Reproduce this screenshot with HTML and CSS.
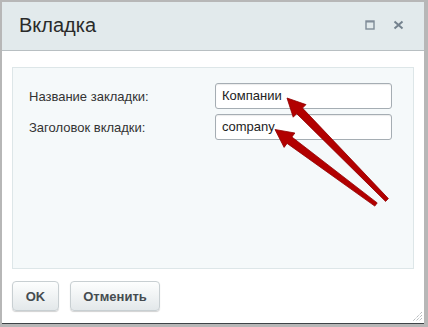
FILE: index.html
```html
<!DOCTYPE html>
<html lang="ru">
<head>
<meta charset="utf-8">
<link rel="stylesheet" href="styles.css">
</head>
<body>
<div class="dialog">
  <div class="head">
    <div class="title">Вкладка</div>
    <div class="tools">
      <svg class="ico" width="10" height="10" viewBox="0 0 10 10"><rect x="1" y="1" width="8" height="8" fill="none" stroke="#7f8c98" stroke-width="1.4"/><line x1="1" y1="1.8" x2="9" y2="1.8" stroke="#7f8c98" stroke-width="1.4"/></svg>
      <svg class="ico" width="11" height="10" viewBox="0 0 11 10"><path d="M1.5 1.5 L9.5 8.5 M9.5 1.5 L1.5 8.5" stroke="#74828e" stroke-width="2" fill="none"/></svg>
    </div>
  </div>
  <div class="body">
    <div class="panel">
      <div class="row">
        <label class="lbl">Название закладки:</label>
        <div class="inp">Компании</div>
      </div>
      <div class="row">
        <label class="lbl">Заголовок вкладки:</label>
        <div class="inp">company</div>
      </div>
    </div>
    <div class="btns">
      <div class="btn ok">OK</div>
      <div class="btn cancel">Отменить</div>
    </div>
  </div>
  <svg class="grip" width="12" height="12" viewBox="0 0 12 12">
    <path d="M11 2 L2 11 M11 5 L5 11 M11 8 L8 11" stroke="#9aa0a4" stroke-width="1" stroke-dasharray="1 1" fill="none"/>
  </svg>
</div>
<svg class="arrows" width="428" height="327" viewBox="0 0 428 327">
  <polygon points="287,98 306,104.6 302.5,108.1 388.4,198.6 385.6,201.4 296.7,113.7 293.2,117.2" fill="#b20000" stroke="#900000" stroke-width="0.8" stroke-linejoin="round"/>
  <polygon points="275,129.5 294.9,133 291.9,137 377.2,202.9 374.8,206.1 287.1,143.4 284.1,147.4" fill="#b20000" stroke="#900000" stroke-width="0.8" stroke-linejoin="round"/>
</svg>
</body>
</html>
```

FILE: styles.css
```css
html, body {
  margin: 0;
  padding: 0;
}
body {
  width: 428px;
  height: 327px;
  background: #b7b7b7;
  font-family: "Liberation Sans", Arial, sans-serif;
  position: relative;
  overflow: hidden;
}
.dialog {
  position: relative;
  margin: 2px 4px 0 2px;
  height: 321px;
  background: #ffffff;
  border-bottom: 1px solid #3f4347;
  display: flex;
  flex-direction: column;
}
.head {
  height: 48px;
  background: #e2eaec;
  border-bottom: 1px solid #b8bfc2;
  display: flex;
  align-items: center;
  justify-content: space-between;
  padding: 0 20px 0 17px;
  flex: none;
}
.title {
  font-size: 20px;
  color: #2a2a2a;
  margin-top: -2px;
}
.tools {
  display: flex;
  align-items: center;
  gap: 18px;
  margin-top: -2px;
}
.ico {
  display: block;
}
.body {
  padding: 16px 10px 0 10px;
}
.panel {
  height: 185px;
  background: #f5f9fa;
  border: 1px solid #dde6e8;
  padding: 15px 0 0 16px;
  display: flex;
  flex-direction: column;
  gap: 5px;
}
.row {
  display: flex;
  align-items: center;
}
.lbl {
  width: 186px;
  font-size: 13px;
  color: #333;
}
.inp {
  box-sizing: border-box;
  width: 177px;
  height: 26px;
  border: 1px solid #a5adb3;
  border-radius: 3px;
  background: #fff;
  box-shadow: inset 0 1px 1px rgba(0,0,0,0.08);
  font-size: 13px;
  color: #222;
  padding: 0 6px;
  line-height: 24px;
}
.btns {
  display: flex;
  gap: 11px;
  margin-top: 12px;
}
.btn {
  box-sizing: border-box;
  height: 30px;
  border: 1px solid #c8cfd2;
  border-radius: 4px;
  background: linear-gradient(#fdfefe, #e3e8ea);
  box-shadow: 0 1px 1px rgba(0,0,0,0.18);
  font-size: 13px;
  font-weight: bold;
  color: #454c50;
  display: flex;
  align-items: center;
  justify-content: center;
}
.ok { width: 47px; }
.cancel { width: 90px; }
.grip {
  position: absolute;
  right: 1px;
  bottom: 1px;
}
.arrows {
  position: absolute;
  left: 0;
  top: 0;
  pointer-events: none;
}
```
